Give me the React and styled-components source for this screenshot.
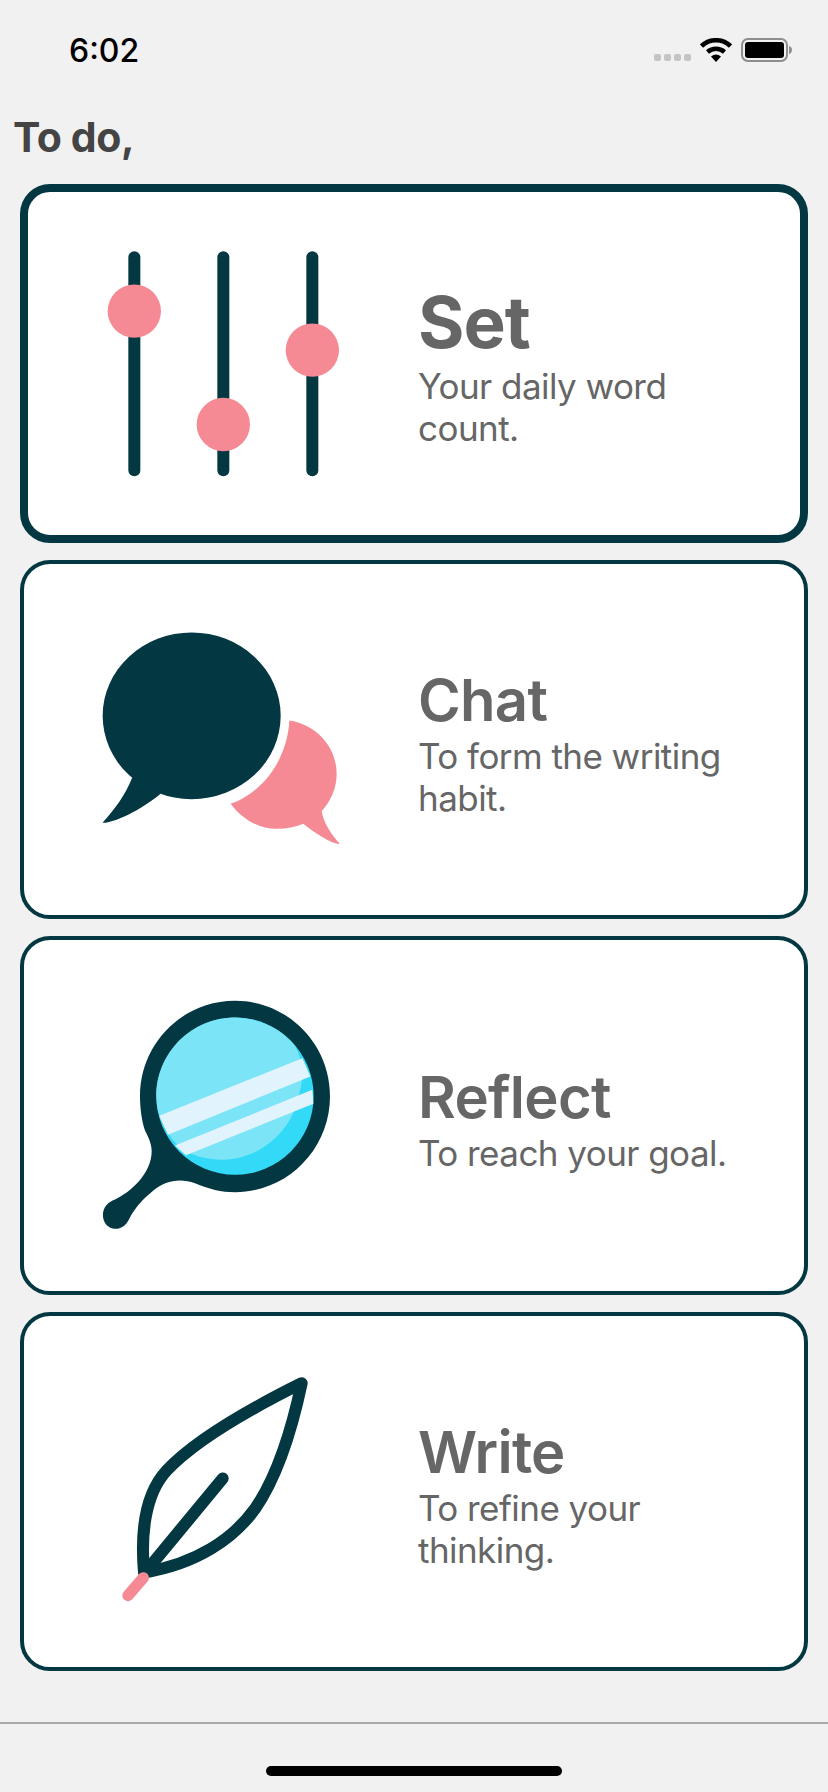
import React from 'react';
import styled, { createGlobalStyle } from 'styled-components';

const DARK = '#033742';
const PINK = '#F58A94';

const GlobalStyle = createGlobalStyle`
  html, body {
    margin: 0;
    padding: 0;
    background: #f1f1f1;
  }

  * {
    box-sizing: border-box;
  }
`;

const Page = styled.div`
  width: 828px;
  height: 1792px;
  display: flex;
  flex-direction: column;
  background: #f1f1f1;
  font-family: Inter, "Liberation Sans", sans-serif;
  overflow: hidden;
`;

const StatusBar = styled.div`
  height: 94px;
  flex: none;
  padding: 6px 34px 0 69px;
  display: flex;
  align-items: center;
  justify-content: space-between;
`;

const Time = styled.span`
  font-size: 32px;
  font-weight: 500;
  color: #000;
`;

const StatusIcons = styled.div`
  display: flex;
  align-items: center;
  gap: 9px;
`;

const Heading = styled.h1`
  margin: 0;
  height: 90px;
  flex: none;
  padding: 19px 0 0 13px;
  font-size: 41px;
  line-height: 48px;
  font-weight: 700;
  letter-spacing: -0.4px;
  color: #444;
`;

const CardList = styled.div`
  display: flex;
  flex-direction: column;
  gap: 17px;
  padding: 0 20px;
`;

const Card = styled.div`
  height: 359px;
  display: flex;
  align-items: center;
  gap: 38px;
  background: #fff;
  border: ${p => (p.$active ? 8 : 4)}px solid ${DARK};
  border-radius: 30px;
  padding-left: ${p => (p.$active ? 32 : 36)}px;
`;

const Glyph = styled.svg`
  width: 320px;
  height: 280px;
  flex: none;
`;

const CardText = styled.div`
  display: flex;
  flex-direction: column;
  padding-top: ${p => (p.$active ? 0 : 4)}px;
  color: #666;
`;

const Title = styled.div`
  font-size: ${p => (p.$active ? 71 : 58)}px;
  line-height: ${p => (p.$active ? 86 : 70)}px;
  font-weight: ${p => (p.$active ? 700 : 600)};
  letter-spacing: ${p => (p.$active ? -1 : -0.7)}px;
`;

const Description = styled.div`
  width: 320px;
  font-size: 35px;
  line-height: 42px;
  letter-spacing: -0.55px;
`;

const Footer = styled.div`
  margin-top: 51px;
  flex: 1;
  border-top: 2px solid #aaa;
  display: flex;
  justify-content: center;
  padding-top: 42px;
`;

const HomeBar = styled.div`
  width: 296px;
  height: 10px;
  border-radius: 5px;
  background: #000;
`;

function StatusGlyphs() {
  return (
    <StatusIcons>
      <svg width="37" height="24" viewBox="0 0 37 24">
        {[0, 10, 20, 30].map(x => (
          <rect key={x} x={x} y="16" width="7" height="7" rx="2" fill="#c4c4c4" />
        ))}
      </svg>
      <svg width="32" height="24" viewBox="0 0 32 24">
        <path d="M1.5 8 A21 21 0 0 1 30.5 8" fill="none" stroke="#000" strokeWidth="4.5" />
        <path d="M7.5 14 A13 13 0 0 1 24.5 14" fill="none" stroke="#000" strokeWidth="4.5" />
        <path d="M11 18.5 A8 8 0 0 1 21 18.5 L16 24 Z" fill="#000" />
      </svg>
      <svg width="53" height="24" viewBox="0 0 53 24">
        <rect x="1" y="1" width="45" height="22" rx="6" fill="none" stroke="#8e8e8e" strokeWidth="2" />
        <rect x="4" y="4" width="39" height="16" rx="3" fill="#000" />
        <path d="M48 8 C52 9 52 15 48 16 Z" fill="#8e8e8e" />
      </svg>
    </StatusIcons>
  );
}

function SlidersIcon() {
  const sliders = [[223, 272], [490, 612], [757, 389]];
  return (
    <Glyph viewBox="0 10.5 960 840">
      {sliders.map(([x, y]) => (
        <g key={x}>
          <line x1={x} y1="110" x2={x} y2="749" stroke={DARK} strokeWidth="36" strokeLinecap="round" />
          <circle cx={x} cy={y} r="80" fill={PINK} />
        </g>
      ))}
    </Glyph>
  );
}

function ChatIcon() {
  return (
    <Glyph viewBox="-60 -31.5 960 840">
      <ellipse cx="335" cy="316" rx="267" ry="250" fill={DARK} />
      <path d="M157 500 C135 555 105 595 68 636 C70 642 150 625 242 550 Z" fill={DARK} />
      <path
        d="M628 330 C710 342 770 410 770 490 C770 535 752 572 725 602 C732 640 755 672 778 698 C780 706 740 695 670 640 C645 650 620 655 590 655 C535 655 485 625 452 580 C545 548 622 450 628 330 Z"
        fill={PINK}
      />
    </Glyph>
  );
}

function MirrorIcon() {
  return (
    <Glyph viewBox="-90 -43.5 960 840">
      <path
        d="M435 31 C592 31 720 158 720 317 C720 476 592 605 435 605 C395 605 355 595 315 578 C270 562 225 570 190 600 C160 625 135 650 118 685 C105 712 85 718 68 714 C45 708 35 685 40 662 C45 645 55 635 75 627 C120 605 185 550 185 482 C185 460 175 440 165 420 C155 390 150 350 150 317 C150 158 278 31 435 31 Z"
        fill={DARK}
      />
      <circle cx="435" cy="317" r="236" fill="#33DAF7" />
      <path d="M435 81 C500 81 570 110 610 160 C640 200 640 270 630 300 C610 430 500 510 390 508 C340 505 300 495 262 462 C220 420 199 370 199 317 C199 187 305 81 435 81 Z" fill="#7BE4F7" />
      <path d="M208 376 L637 203 L661 258 L234 433 Z" fill="#E1F3FD" />
      <path d="M255 465 L667 298 L670 340 L288 494 Z" fill="#E1F3FD" />
    </Glyph>
  );
}

function LeafIcon() {
  return (
    <Glyph viewBox="-120 -25.5 960 840">
      <path
        d="M132 636 C122 520 135 400 200 330 C280 245 440 150 605 68 C575 210 530 350 465 445 C400 535 290 610 132 636 Z"
        fill="none"
        stroke={DARK}
        strokeWidth="36"
        strokeLinejoin="round"
      />
      <line x1="140" y1="630" x2="368" y2="354" stroke={DARK} strokeWidth="36" strokeLinecap="round" />
      <line x1="130" y1="652" x2="84" y2="705" stroke={PINK} strokeWidth="34" strokeLinecap="round" />
    </Glyph>
  );
}

const CARDS = [
  { title: 'Set', text: 'Your daily word count.', Icon: SlidersIcon, active: true },
  { title: 'Chat', text: 'To form the writing habit.', Icon: ChatIcon },
  { title: 'Reflect', text: 'To reach your goal.', Icon: MirrorIcon },
  { title: 'Write', text: 'To refine your thinking.', Icon: LeafIcon },
];

export default function App() {
  return (
    <Page>
      <GlobalStyle />
      <StatusBar>
        <Time>6:02</Time>
        <StatusGlyphs />
      </StatusBar>
      <Heading>To do,</Heading>
      <CardList>
        {CARDS.map(({ title, text, Icon, active }) => (
          <Card key={title} $active={active}>
            <Icon />
            <CardText $active={active}>
              <Title $active={active}>{title}</Title>
              <Description>{text}</Description>
            </CardText>
          </Card>
        ))}
      </CardList>
      <Footer>
        <HomeBar />
      </Footer>
    </Page>
  );
}
